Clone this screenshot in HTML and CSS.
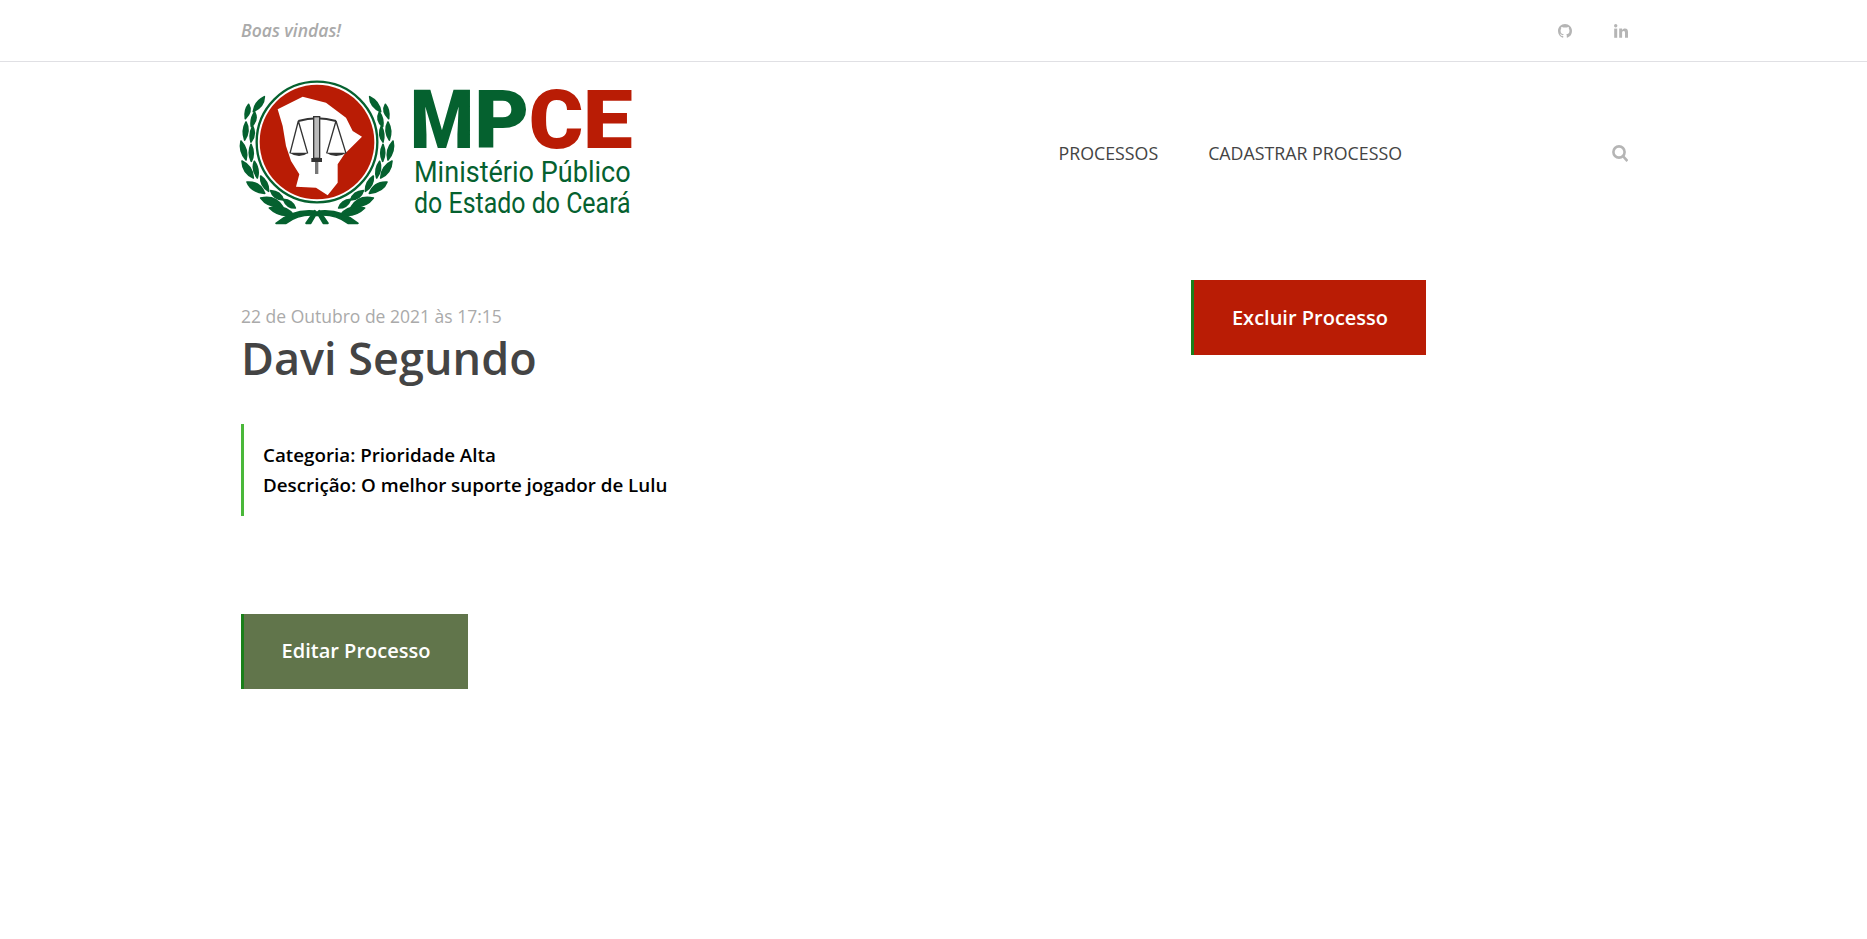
FILE: index.html
```html
<!DOCTYPE html>
<html lang="pt-BR">

<head>
    <meta charset="UTF-8">
    <meta name="viewport" content="width=device-width, initial-scale=1.0">
    <title>Processo</title>
    <link rel="stylesheet" href="styles.css">
</head>

<body>

	<div class="topbar">
		<div class="container topbar-row">
			<em class="welcome">Boas vindas!</em>
			<div class="social">
				<a href="#" class="social-link">
					<svg class="icon" viewBox="0 0 16 16"><path d="M8 0C3.58 0 0 3.58 0 8c0 3.54 2.29 6.53 5.47 7.59.4.07.55-.17.55-.38 0-.19-.01-.82-.01-1.49-2.01.37-2.53-.49-2.69-.94-.09-.23-.48-.94-.82-1.13-.28-.15-.68-.52-.01-.53.63-.01 1.08.58 1.23.82.72 1.21 1.87.87 2.33.66.07-.52.28-.87.51-1.07-1.78-.2-3.64-.89-3.64-3.95 0-.87.31-1.59.82-2.15-.08-.2-.36-1.02.08-2.12 0 0 .67-.21 2.2.82.64-.18 1.32-.27 2-.27.68 0 1.36.09 2 .27 1.53-1.04 2.2-.82 2.2-.82.44 1.1.16 1.92.08 2.12.51.56.82 1.27.82 2.15 0 3.07-1.87 3.75-3.65 3.95.29.25.54.73.54 1.48 0 1.07-.01 1.93-.01 2.2 0 .21.15.46.55.38A8.013 8.013 0 0016 8c0-4.42-3.58-8-8-8z"/></svg>
				</a>
				<a href="#" class="social-link">
					<svg class="icon" viewBox="0 0 14 14"><circle cx="1.7" cy="1.8" r="1.7"/><rect x="0.2" y="4.6" width="3" height="9.2"/><path d="M5.2 4.6h2.9v1.3c.5-.9 1.6-1.5 2.9-1.5 2.4 0 3 1.600 3 3.800v5.600h-3V8.900c0-1.100-.2-2-1.400-2-1.200 0-1.500.9-1.500 2v4.900H5.200z"/></svg>
				</a>
			</div>
		</div>
	</div>

	<header class="container site-header">
		<a href="#" class="logo">
			<svg class="logo-img" viewBox="33 27 1179 438">
				<g transform="translate(18 18)">
					<g class="laurel">
						<g id="branch">
							<path d="M52 107 Q56 76 85 62 Q84 92 52 107Z"/>
							<path d="M28 128 Q24 102 38 85 Q50 106 28 128Z"/>
							<path d="M46 152 Q42 128 56 108 Q68 132 46 152Z"/>
							<path d="M26 192 Q16 164 30 138 Q44 164 26 192Z"/>
							<path d="M45 198 Q38 174 50 150 Q62 176 45 198Z"/>
							<path d="M30 252 Q8 226 15 195 Q38 220 30 252Z"/>
							<path d="M46 256 Q34 232 45 205 Q58 232 46 256Z"/>
							<path d="M52 306 Q20 292 18 255 Q50 270 52 306Z"/>
							<path d="M64 306 Q46 282 55 256 Q72 280 64 306Z"/>
							<path d="M86 352 Q44 348 33 318 Q72 316 86 352Z"/>
							<path d="M98 346 Q72 330 74 300 Q98 316 98 346Z"/>
							<path d="M140 392 Q96 396 74 366 Q118 356 140 392Z"/>
							<path d="M142 372 Q112 370 104 344 Q134 346 142 372Z"/>
							<path d="M172 416 Q130 426 100 396 Q146 384 172 416Z"/>
							<path d="M178 396 Q152 396 142 370 Q170 372 178 396Z"/>
							<path d="M120 442 Q170 400 232 405 Q244 410 243 418 Q190 412 150 442Z"/>
							<path d="M243 410 L262 442 L276 442 L250 404Z"/>
						</g>
						<use href="#branch" transform="matrix(-1 0 0 1 486 0)"/>
					</g>
					<circle class="seal-ring" cx="243" cy="198" r="181"/>
					<circle class="seal-disc" cx="243" cy="198" r="172"/>
					<polygon class="seal-map" points="125,100 200,62 270,80 330,125 350,165 378,182 325,235 305,265 305,320 275,358 240,335 180,332 190,295 165,255 150,210 140,150"/>
					<g class="scale">
						<path class="scale-line" d="M187 135 Q243 118 300 135"/>
						<path class="scale-line thin" d="M187 135 L162 232 M187 135 L215 232 M300 135 L272 232 M300 135 L330 232"/>
						<path d="M160 230 H217 Q190 250 160 230Z M270 230 H332 Q300 250 270 230Z"/>
						<rect class="scale-col" x="233" y="122" width="18" height="125"/>
						<rect x="226" y="246" width="32" height="12"/>
						<rect class="scale-grip" x="237" y="258" width="10" height="36"/>
					</g>
				</g>
				<text class="logo-mark"><tspan class="logo-green" x="540" y="235" textLength="192" lengthAdjust="spacingAndGlyphs">M</tspan><tspan class="logo-green" x="733" y="235" textLength="165" lengthAdjust="spacingAndGlyphs">P</tspan><tspan class="logo-red" x="896" y="235" textLength="164" lengthAdjust="spacingAndGlyphs">C</tspan><tspan class="logo-red" x="1058" y="235" textLength="150" lengthAdjust="spacingAndGlyphs">E</tspan></text>
				<text class="logo-sub" x="552" y="335" textLength="650" lengthAdjust="spacingAndGlyphs">Ministério Público</text>
				<text class="logo-sub" x="552" y="428" textLength="650" lengthAdjust="spacingAndGlyphs">do Estado do Ceará</text>
			</svg>
		</a>
		<nav class="main-nav">
			<a href="#">PROCESSOS</a>
			<a href="#">CADASTRAR PROCESSO</a>
		</nav>
		<a href="#" class="search">
			<svg class="icon" viewBox="0 0 16 17"><circle cx="7" cy="7" r="5.600" class="search-ring"/><path d="M11 11.200 15.400 16" class="search-handle"/></svg>
		</a>
	</header>

	<main class="container">
		<div class="process-row">
			<div class="process-info">
				<p class="date">22 de Outubro de 2021 às 17:15</p>
				<h1>Davi Segundo</h1>
				<blockquote>
					Categoria: Prioridade Alta<br>
					Descrição: O melhor suporte jogador de Lulu
				</blockquote>
				<a href="#" class="btn btn-edit">Editar Processo</a>
			</div>
			<div class="process-actions">
				<a href="#" class="btn btn-delete">Excluir Processo</a>
			</div>
		</div>
	</main>

</body>
</html>
```

FILE: styles.css
```css
body {
	font-family: "Open Sans", Arial, sans-serif;
	margin: 0;
	padding: 0;
	background-color: #fff;
	color: #444;
}

a {
	text-decoration: none;
}

.container {
	width: 1385px;
	margin: 0 auto;
}

.topbar {
	border-bottom: 1px solid #e0e0e4;
}

.topbar-row {
	display: flex;
	justify-content: space-between;
	align-items: center;
	height: 61px;
}

.welcome {
	font-size: 17.5px;
	font-weight: 600;
	color: #aaa;
	margin-top: -2px;
}

.social {
	display: flex;
	gap: 42px;
	margin-right: -2px;
	margin-top: 1px;
}

.social-link {
	display: block;
	width: 14px;
	height: 14px;
	color: #b5b5b5;
}

.icon {
	display: block;
	width: 100%;
	height: 100%;
	fill: currentColor;
}

.site-header {
	display: flex;
	align-items: center;
	padding-top: 17px;
}

.logo {
	display: block;
	width: 393px;
	height: 146px;
}

.logo-img {
	display: block;
	width: 393px;
	height: 146px;
	overflow: visible;
}

.laurel {
	fill: #05612f;
	stroke: #05612f;
	stroke-width: 5;
	stroke-linejoin: round;
}

.seal-ring {
	fill: #fff;
	stroke: #05612f;
	stroke-width: 7;
}

.seal-disc {
	fill: #b91c05;
}

.seal-map {
	fill: #fff;
}

.scale {
	fill: #333;
}

.scale-col {
	fill: #bbb;
	stroke: #333;
	stroke-width: 4;
}

.scale-grip {
	fill: #777;
}

.scale-line {
	fill: none;
	stroke: #333;
	stroke-width: 6;
}

.scale-line.thin {
	stroke-width: 4;
}

.logo-mark {
	font-family: Roboto, Arial, sans-serif;
	font-size: 243px;
	font-weight: 900;
}

.logo-green {
	fill: #05612f;
}

.logo-red {
	fill: #b91c05;
}

.logo-sub {
	font-family: Roboto, Arial, sans-serif;
	font-size: 88px;
	fill: #05612f;
}

.main-nav {
	display: flex;
	gap: 50px;
	margin-left: auto;
	margin-right: 210px;
	margin-top: 2px;
}

.main-nav a {
	font-size: 17.8px;
	color: #444;
}

.search {
	display: block;
	width: 16px;
	height: 17px;
	margin-right: -2px;
	color: #b5b5b5;
	margin-top: 2px;
}

.search-ring, .search-handle {
	fill: none;
	stroke: currentColor;
	stroke-width: 2.600;
}

.process-row {
	display: flex;
	padding-top: 55px;
}

.process-info {
	width: 950px;
}

.date {
	margin: 24px 0 0 0;
	font-size: 17.5px;
	line-height: 24px;
	font-weight: 400;
	color: #aaa;
}

h1 {
	margin: 0;
	font-size: 45px;
	line-height: 60px;
	font-weight: 600;
	color: #444;
}

blockquote {
	margin: 36px 0 0 0;
	padding: 16px 0 16px 19px;
	border-left: 3px solid #4ab83a;
	font-size: 18.8px;
	line-height: 30px;
	font-weight: 600;
	color: #000;
}

.btn {
	display: inline-block;
	box-sizing: border-box;
	height: 75px;
	line-height: 75px;
	border-left: 3px solid #1a7f1a;
	font-size: 20px;
	font-weight: 600;
	color: #fff;
	text-align: center;
}

.btn-edit {
	width: 227px;
	margin-top: 98px;
	line-height: 73px;
	background-color: #61754b;
}

.btn-delete {
	width: 235px;
	background-color: #b91c05;
}
```
